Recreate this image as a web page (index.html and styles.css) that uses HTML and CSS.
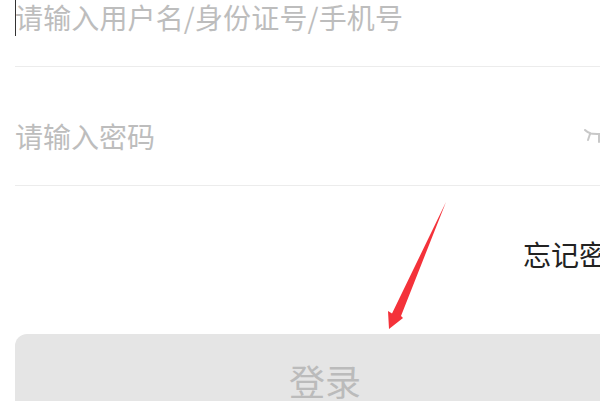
FILE: index.html
```html
<!DOCTYPE html>
<html lang="zh-CN">
<head>
    <meta charset="UTF-8">
    <title>登录</title>
    <link rel="stylesheet" href="styles.css">
</head>
<body>
    <div class="form">
        <!-- account -->
        <div class="field">
            <span class="caret"></span>
            <span class="placeholder account">请输入用户名/身份证号/手机号</span>
        </div>

        <!-- password -->
        <div class="field">
            <span class="placeholder">请输入密码</span>
            <svg class="eye" width="36" height="20" viewBox="0 0 36 20" fill="none" stroke="#c8c8c8" stroke-width="2" stroke-linecap="round">
                <path d="M1 2 C3 4 5 5 7 5.500 C10 6 13 6 18 6 C24 6 30 5 35 1"/>
                <path d="M6 6 L4 12"/>
                <path d="M15 6 L15 14"/>
            </svg>
        </div>

        <div class="forgot">忘记密码</div>

        <button class="submit" type="button">登录</button>
    </div>

    <!-- annotation drawn on top of the screenshot -->
    <svg class="arrow" width="600" height="401" viewBox="0 0 600 401">
        <polygon fill="#f4323a" points="446,202 401,316 403,318 389,329 388,311 392,313.500"/>
    </svg>
</body>
</html>
```

FILE: styles.css
```css
/* Basic styling for the page */
html, body {
    height: 100%;
}
body {
    margin: 0;
    overflow: hidden;
    position: relative;
    background-color: #fff;
    font-family: "Noto Sans CJK SC", "Liberation Sans", sans-serif;
}
.form {
    width: 620px;
    margin: -52px 0 0 15px;
}
.field {
    display: flex;
    align-items: center;
    justify-content: space-between;
    position: relative;
    box-sizing: border-box;
    height: 119px;
    padding: 20px 0 0 0;
    border-bottom: 1px solid #ececec;
}
.caret {
    position: absolute;
    left: 0;
    top: 52px;
    width: 1px;
    height: 36px;
    background-color: #333;
}
.placeholder {
    font-size: 28px;
    line-height: 36px;
    color: #bdbdbd;
}
.account {
    letter-spacing: 0.140px;
}
.eye {
    flex: none;
    margin: 4px 15px 0 0;
}
.forgot {
    margin-top: 48px;
    text-align: right;
    font-size: 28px;
    line-height: 40px;
    color: #222;
}
.submit {
    display: block;
    width: 100%;
    height: 92px;
    margin-top: 60px;
    padding: 0;
    border: 0;
    border-radius: 12px;
    background-color: #e5e5e5;
    font-family: inherit;
    font-size: 36px;
    color: #bbb;
}
.arrow {
    position: absolute;
    left: 0;
    top: 0;
}
```
